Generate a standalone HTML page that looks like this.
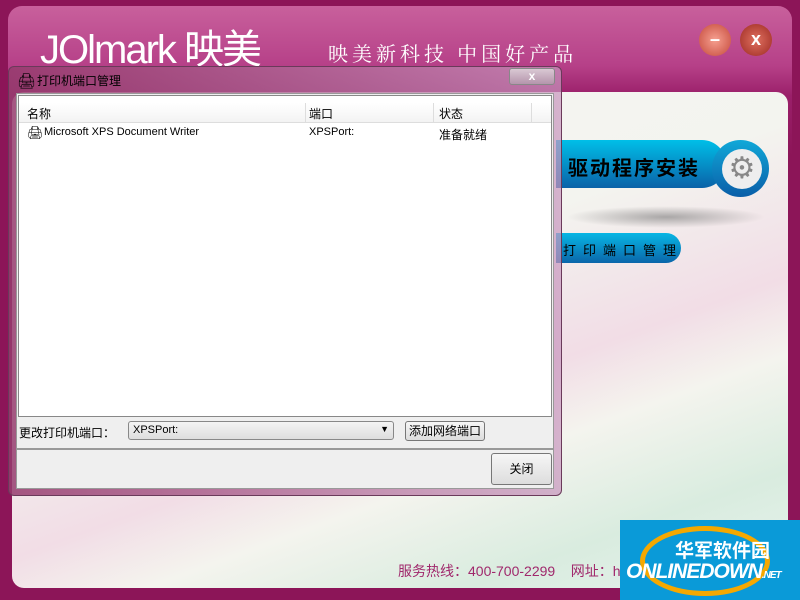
<!DOCTYPE html>
<html><head><meta charset="utf-8"><style>
*{margin:0;padding:0;box-sizing:border-box}
body{width:800px;height:600px;overflow:hidden;position:relative;background:#8c1558;font-family:"Liberation Sans","Noto Sans CJK SC",sans-serif;font-size:12px}
.abs{position:absolute}
#top{left:8px;top:6px;width:784px;height:150px;border-radius:14px 14px 0 0;background:linear-gradient(#c8609c 0,#b64088 40%,#9a1f6a 60%,#8c1558 100%)}
#panel{left:12px;top:92px;width:776px;height:496px;border-radius:12px;background:linear-gradient(160deg,#f6f5f2 0%,#f3f4ef 40%,#f2dde6 60%,#f4f4ee 70%,#d9ecdf 85%,#e8f2ee 100%)}
.btn{width:32px;height:32px;border-radius:50%;top:24px;color:#fff;font-weight:bold;text-align:center;line-height:30px;font-size:18px}
#dlg{left:8px;top:66px;width:554px;height:430px;border-radius:6px;background:linear-gradient(90deg,rgba(150,60,110,.85),rgba(200,150,190,.7));border:1px solid #6a3a5a}
#inner{left:7px;top:26px;width:538px;height:396px;background:#efefef;border:1px solid #999}
#list{left:1px;top:1px;width:534px;height:322px;background:#fff;border:1px solid #888}
.hd{top:7px;height:20px;border-bottom:1px solid #ddd;background:linear-gradient(#fff,#f3f3f3);width:532px}
.sep{top:0;width:1px;height:20px;background:#ddd}
.t{white-space:nowrap;color:#000}
</style></head><body>
<div id="top" class="abs"></div>
<div id="panel" class="abs"></div>
<div class="abs t" style="left:40px;top:28px;color:#fff;font-size:40px;letter-spacing:-2px;line-height:44px">JOlmark 映美</div>
<div class="abs t" style="left:328px;top:38px;color:#fff;font-size:20px;letter-spacing:4px;font-family:'Noto Serif CJK SC',serif">映美新科技 中国好产品</div>
<div class="abs btn" style="left:699px;background:radial-gradient(#f6a090,#c4483a)">–</div>
<div class="abs btn" style="left:740px;background:radial-gradient(#e07060,#9c2a22)">x</div>
<div class="abs" style="left:556px;top:140px;width:170px;height:48px;border-radius:0 24px 24px 0;background:linear-gradient(#00bfe8,#0a62a8)"></div>
<div class="abs t" style="left:568px;top:152px;font-size:20px;font-weight:bold;letter-spacing:2px">驱动程序安装</div>
<div class="abs" style="left:712px;top:140px;width:57px;height:57px;border-radius:50%;background:linear-gradient(#10a8d8,#0a5ea8)"></div>
<div class="abs" style="left:722px;top:149px;width:40px;height:40px;border-radius:50%;background:#eee;color:#888;font-size:30px;text-align:center;line-height:40px">⚙</div>
<div class="abs" style="left:566px;top:206px;width:200px;height:22px;border-radius:50%;background:radial-gradient(rgba(120,120,120,.6),rgba(200,200,200,0) 70%)"></div>
<div class="abs" style="left:556px;top:233px;width:125px;height:30px;border-radius:0 15px 15px 0;background:linear-gradient(#08b6e4,#0a66aa)"></div>
<div class="abs t" style="left:563px;top:240px;font-size:13px;letter-spacing:7px">打印端口管理</div>
<div class="abs t" style="left:398px;top:561px;color:#a0286c;font-size:14px">服务热线：400-700-2299 &nbsp;&nbsp; 网址：ht</div>
<div class="abs" style="left:620px;top:520px;width:180px;height:80px;background:#0a9ad8"></div>
<div class="abs" style="left:640px;top:526px;width:130px;height:70px;border:5px solid #f5a800;border-radius:50%"></div>
<div class="abs t" style="left:675px;top:536px;color:#fff;font-weight:bold;font-size:19px">华军软件园</div>
<div class="abs t" style="left:626px;top:560px;color:#fff;font-weight:bold;font-style:italic;font-size:21px;letter-spacing:-1px">ONLINEDOWN<span style="font-size:10px">.NET</span></div>
<div id="dlg" class="abs">
<div class="abs t" style="left:8px;top:5px;font-size:15px">🖨</div>
<div class="abs t" style="left:28px;top:5px;font-size:12px">打印机端口管理</div>
<div class="abs" style="left:500px;top:1px;width:46px;height:17px;border:1px solid #888;border-radius:3px;background:linear-gradient(#d9c8d3,#b595ac);color:#fff;font-weight:bold;text-align:center;line-height:14px">x</div>
<div id="inner" class="abs">
<div id="list" class="abs">
<div class="abs hd"><div class="abs sep" style="left:286px"></div><div class="abs sep" style="left:414px"></div><div class="abs sep" style="left:512px"></div>
<span class="abs t" style="left:8px;top:2px">名称</span><span class="abs t" style="left:290px;top:2px">端口</span><span class="abs t" style="left:420px;top:2px">状态</span></div>
<span class="abs t" style="left:8px;top:29px;font-size:13px">🖨</span>
<span class="abs t" style="left:25px;top:30px;font-size:11px">Microsoft XPS Document Writer</span>
<span class="abs t" style="left:290px;top:30px;font-size:11px">XPSPort:</span>
<span class="abs t" style="left:420px;top:30px">准备就绪</span>
</div>
<span class="abs t" style="left:2px;top:330px">更改打印机端口：</span>
<div class="abs" style="left:111px;top:327px;width:266px;height:19px;border:1px solid #888;border-radius:3px;background:linear-gradient(#f4f4f4,#ddd);font-size:11px;padding:2px 4px">XPSPort:<span style="position:absolute;right:4px;top:2px;font-size:9px">▼</span></div>
<div class="abs t" style="left:388px;top:327px;width:80px;height:20px;border:1px solid #777;border-radius:3px;background:linear-gradient(#f6f6f6,#ddd);text-align:center;line-height:18px">添加网络端口</div>
<div class="abs" style="left:0;top:354px;width:536px;height:2px;background:#999"></div>
<div class="abs t" style="left:474px;top:359px;width:61px;height:32px;border:1px solid #777;border-radius:3px;background:linear-gradient(#f6f6f6,#ddd);text-align:center;line-height:30px">关闭</div>
</div></div>
</body></html>
